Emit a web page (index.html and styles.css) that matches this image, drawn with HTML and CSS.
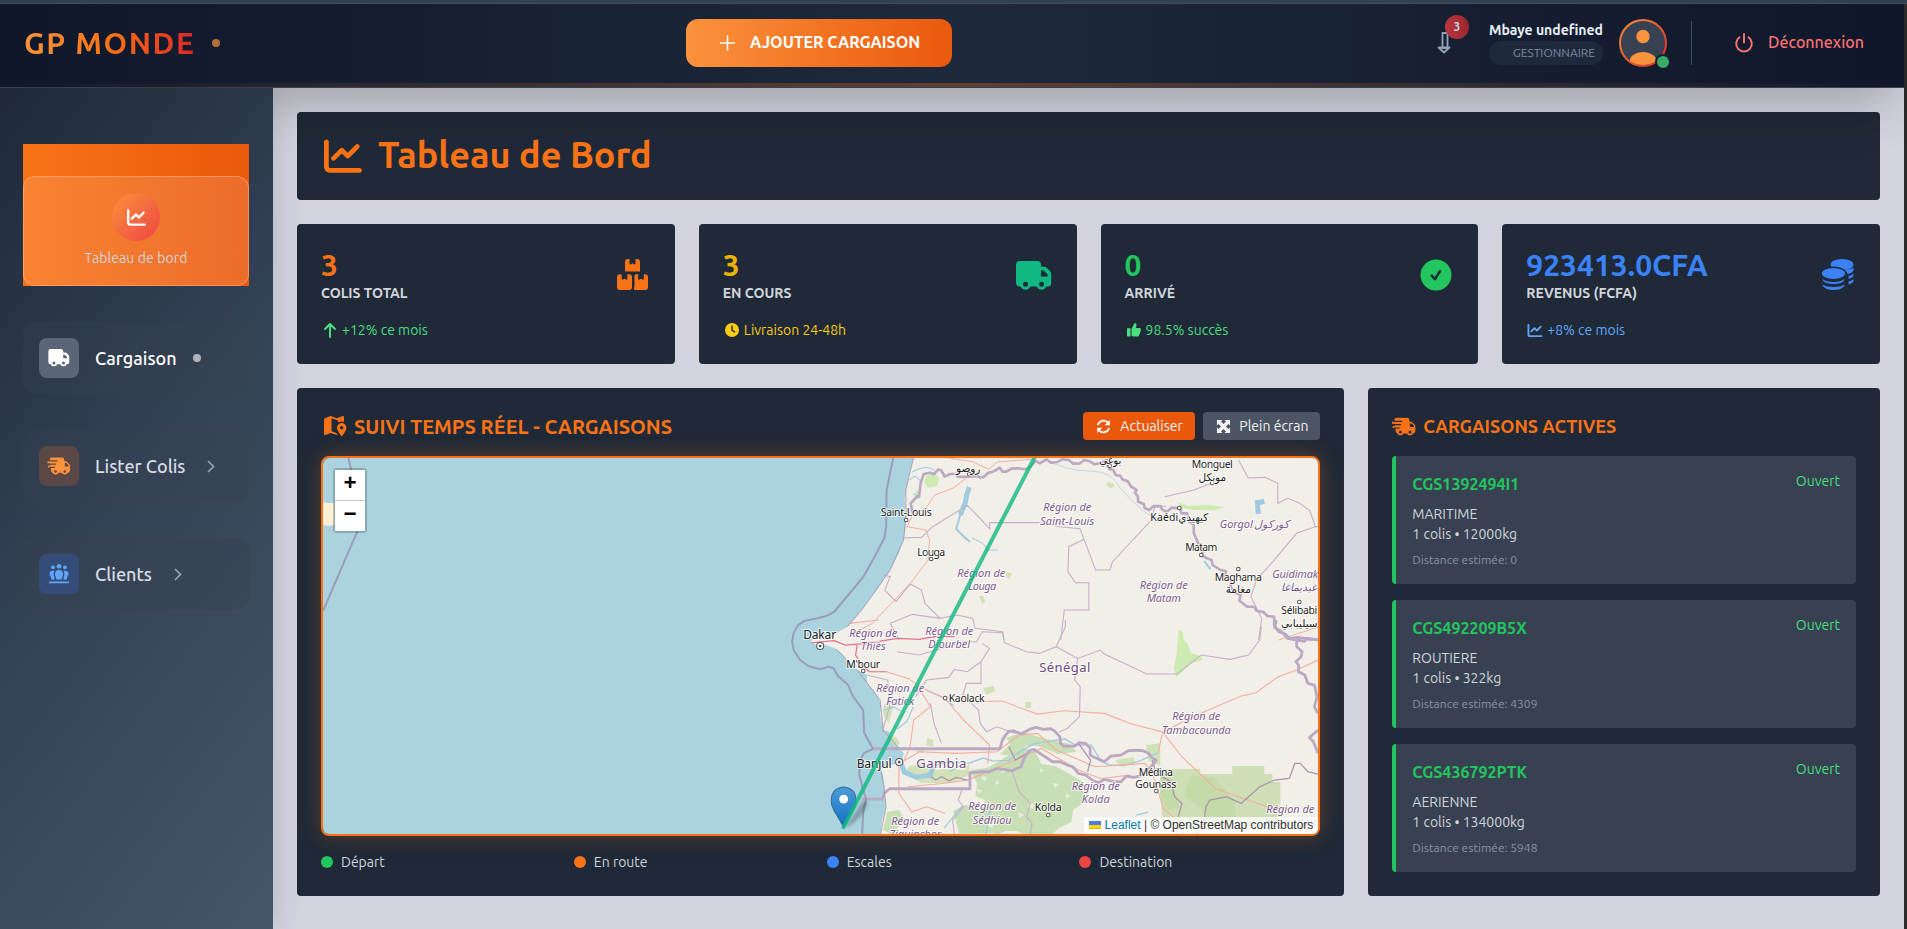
FILE: index.html
```html
<!DOCTYPE html>
<html lang="fr">
<head>
<meta charset="utf-8">
<title>GP Monde - Tableau de Bord</title>
<link rel="stylesheet" href="styles.css">
</head>
<body>
<svg class="defs" width="0" height="0" aria-hidden="true">
  <defs>
    <mask id="truckHoles"><rect width="36" height="30" fill="#fff"/><circle cx="9.5" cy="23.3" r="2.5" fill="#000"/><circle cx="25.5" cy="23.3" r="2.5" fill="#000"/><path d="M25 9.5h2.6l4 4v2H25z" fill="#000"/></mask>
    <mask id="fastHoles"><rect width="42" height="31" fill="#fff"/><circle cx="14" cy="25" r="2.3" fill="#000"/><circle cx="30" cy="25" r="2.3" fill="#000"/><path d="M30 10.5h2.6l4 4v2H30z" fill="#000"/><path d="M3 6.800h14M1 12.300h14M3 18h10" stroke="#000" stroke-width="2"/></mask>
    <symbol id="chart" viewBox="0 0 512 512"><path d="M64 64c0-17.700-14.300-32-32-32S0 46.300 0 64V400c0 44.200 35.800 80 80 80H480c17.700 0 32-14.300 32-32s-14.300-32-32-32H80c-8.800 0-16-7.200-16-16V64zm406.600 86.600c12.500-12.500 12.500-32.800 0-45.300s-32.800-12.500-45.300 0L320 210.700l-57.400-57.400c-12.500-12.500-32.800-12.500-45.300 0l-112 112c-12.500 12.500-12.500 32.800 0 45.300s32.800 12.500 45.300 0L240 221.300l57.400 57.400c12.500 12.500 32.800 12.500 45.300 0l128-128z"/></symbol>
    <symbol id="truck" viewBox="0 0 36 30"><g mask="url(#truckHoles)"><path d="M4 0h17a4 4 0 0 1 4 4v1.800h3.200a4 4 0 0 1 2.800 1.200l3 3a4 4 0 0 1 1.200 2.800V22a3.500 3.500 0 0 1-3.500 3.500H4A4 4 0 0 1 0 21.500V4a4 4 0 0 1 4-4z"/><circle cx="9.500" cy="23.300" r="5.400"/><circle cx="25.500" cy="23.300" r="5.400"/></g></symbol>
    <symbol id="truckfast" viewBox="0 0 40 31"><g mask="url(#fastHoles)"><path d="M8 1h17a4 4 0 0 1 4 4v2.500h3.700l5 5a4 4 0 0 1 1.300 3V23a4 4 0 0 1-4 4H10a4 4 0 0 1-4-4V18.300H2.500a1.800 1.800 0 0 1 0-3.600h2V11H1a1.800 1.800 0 0 1 0-3.600h3V5a4 4 0 0 1 4-4z"/><circle cx="14" cy="25" r="5.200"/><circle cx="30" cy="25" r="5.200"/></g></symbol>
    <symbol id="boxes" viewBox="0 0 31 31"><path d="M11 0h1.500v4.500a1 1 0 0 0 1.600.7l1.400-1 1.400 1a1 1 0 0 0 1.600-.7V0H20a3 3 0 0 1 3 3v9.500H8V3a3 3 0 0 1 3-3zM3 15.300h1.700v4.500a1 1 0 0 0 1.500.7l1.300-1 1.300 1a1 1 0 0 0 1.500-.7v-4.500H12a3 3 0 0 1 3 3V28a3 3 0 0 1-3 3H3a3 3 0 0 1-3-3v-9.700a3 3 0 0 1 3-3zM19.500 15.300h1.700v4.500a1 1 0 0 0 1.500.7l1.300-1 1.300 1a1 1 0 0 0 1.500-.7v-4.500H28a3 3 0 0 1 3 3V28a3 3 0 0 1-3 3H18q-1 0-1-1v-1l.5-2V18q-.5-2.700 2-2.700z"/></symbol>
    <symbol id="check" viewBox="0 0 32 32"><circle cx="16" cy="16" r="15.500"/><path d="M11.800 16.700l3.200 3.500 5-8" fill="none" stroke="#1f2937" stroke-width="2.500" stroke-linecap="round" stroke-linejoin="round"/></symbol>
    <symbol id="coins" viewBox="0 0 32 31"><ellipse cx="20" cy="5.500" rx="11.500" ry="5.500"/><path d="M31.500 8.500v3q-1 2.500-6 3.500-1-3-5-4.300 8 0 11-2.200zM31.500 14.500v2.500q-1 2-5 3v-3q3.500-.7 5-2.500zM31.500 20v2.500q-1 2-5 3v-3q3.500-.7 5-2.500z"/><ellipse cx="11.500" cy="14.500" rx="12.500" ry="6.200" stroke="#1f2937" stroke-width="1.500"/><path d="M.5 20q3.500 3 11 3t11-3v1q-2 4-11 4T.5 21zM.5 25.500q3.500 2.500 11 2.500t11-2.500v1.300q-3 4.200-11 4.200T.5 26.800z"/></symbol>
    <symbol id="arrowup" viewBox="0 0 14 16"><path d="M7 15V2M2 7l5-5 5 5" fill="none" stroke="currentColor" stroke-width="2" stroke-linecap="round" stroke-linejoin="round"/></symbol>
    <symbol id="clock" viewBox="0 0 16 16"><circle cx="8" cy="8" r="7"/><path d="M8 4v4.200l2.500 1.700" fill="none" stroke="#1f2937" stroke-width="1.400" stroke-linecap="round"/></symbol>
    <symbol id="thumb" viewBox="0 0 16 16"><path d="M1 6.200h3.500v8.300H1.800a.8.800 0 0 1-.8-.8zM5.500 7l2.600-5.200Q8.700.8 9.800 1.300q1 .6.700 1.700L9.800 6h4q1.200.2 1.200 1.300 0 .7-.6 1.100.5.600.3 1.300-.2.700-.8.900.3.700 0 1.200-.3.600-.9.700.2.900-.3 1.400-.4.600-1.200.6H8q-1.500-.2-2.500-1.100z"/></symbol>
    <symbol id="mapicon" viewBox="0 0 24 22"><path fill-rule="evenodd" d="M2 3.300L7.500 1l6.500 2.300L19.500 1q1.500-.3 1.500 1.200v4.600q-1-.3-2.300-.3-2 0-3.700 1V5.400L8.500 3.200v13l4.800 1.800 1.600 2.300L7.500 18 2.600 20Q1 20.300 1 18.800V4.800q0-1.100 1-1.500z"/><path fill-rule="evenodd" d="M18.700 8a4.700 4.700 0 0 1 4.700 4.700q0 3-4.700 8.800Q14 15.700 14 12.700A4.700 4.700 0 0 1 18.700 8zm0 3a1.700 1.700 0 1 0 0 3.400 1.700 1.700 0 0 0 0-3.400z"/><path d="M2 3.500l6-1.800v15.500l-6 2z"/></symbol>
    <symbol id="sync" viewBox="0 0 16 16"><path d="M2 6.500A6.200 6.200 0 0 1 13 4.300M14 9.500A6.200 6.200 0 0 1 3 11.700" fill="none" stroke="currentColor" stroke-width="2"/><path d="M14.800 1v5.700H9.100zM1.200 15V9.300h5.700z"/></symbol>
    <symbol id="expand" viewBox="0 0 16 16"><path d="M1 1h6L5.300 2.700 8 5.400l2.700-2.700L9 1h6v6l-1.700-1.700L10.600 8l2.700 2.700L15 9v6H9l1.700-1.700L8 10.600l-2.700 2.700L7 15H1V9l1.700 1.700L5.400 8 2.700 5.300 1 7z"/></symbol>
    <symbol id="users" viewBox="0 0 22 20"><circle cx="11" cy="2.300" r="2.300"/><circle cx="5" cy="3.300" r="1.900"/><circle cx="17" cy="3.300" r="1.900"/><path d="M8.200 15.500V14Q6.800 12.500 7 9.800 7.400 6 11 6t4 3.800q.2 2.700-1.200 4.200v1.500zM6.500 6.800Q4.800 10 6.500 14v1.500H3V13Q1 11.500 1.500 9 2.500 6 6.500 6.800zM15.500 6.800Q17.200 10 15.500 14v1.500H19V13q2-1.500 1.500-4-1-3-5-2.200zM1 17.500h20v1.700H1z"/></symbol>
    <linearGradient id="pinFill" x1="0" y1="0" x2="0" y2="1"><stop offset="0" stop-color="#4c9bd6"/><stop offset="1" stop-color="#126fc6"/></linearGradient>
  </defs>
</svg>

<div class="app">
  <header class="topbar">
    <div class="brand"><span class="brand-name">GP MONDE</span><span class="brand-dot"></span></div>
    <button class="add"><svg width="15" height="16" viewBox="0 0 15 16"><path d="M7.500.5v15M0 8h15" fill="none" stroke="currentColor" stroke-width="1.500"/></svg><span>AJOUTER CARGAISON</span></button>
    <div class="account">
      <div class="bell"><svg width="14" height="22" viewBox="0 0 14 22"><path d="M5.500 1h5v15h-5zM1.500 15.500h11L7 20.500z" fill="none" stroke="currentColor" stroke-width="1.800" stroke-linejoin="round"/></svg><span class="badge">3</span></div>
      <div class="who"><span class="who-name">Mbaye undefined</span><span class="who-role">GESTIONNAIRE</span></div>
      <div class="avatar">
        <svg width="44" height="44" viewBox="0 0 44 44"><circle cx="22" cy="22" r="22" fill="#374151"/><circle cx="22" cy="15.500" r="6.700" fill="#fb923c"/><path d="M9 40v-2.500Q13 31 22 31t13 6.500V40Q29 44 22 44T9 40z" fill="#fb923c"/></svg>
        <span class="online"></span>
      </div>
      <span class="sep"></span>
      <a class="logout"><svg width="20" height="20" viewBox="0 0 20 20"><path d="M5.500 4.300a7.800 7.800 0 1 0 9 0M10 1v8.500" fill="none" stroke="currentColor" stroke-width="2" stroke-linecap="round"/></svg><span>Déconnexion</span></a>
    </div>
  </header>

  <div class="body">
    <nav class="sidebar">
      <a class="nav-active"><span class="nav-card"><span class="nav-circle"><svg width="19" height="19"><use href="#chart"/></svg></span><span class="nav-label">Tableau de bord</span></span></a>
      <a class="nav-item"><span class="nav-icon white"><svg width="22" height="18"><use href="#truck"/></svg></span><span class="nav-text strong">Cargaison</span><span class="nav-dot"></span></a>
      <a class="nav-item"><span class="nav-icon orange"><svg width="24" height="18"><use href="#truckfast"/></svg></span><span class="nav-text">Lister Colis</span><svg class="chev" width="8" height="13" viewBox="0 0 8 13"><path d="M1 1l5.500 5.500L1 12" fill="none" stroke="currentColor" stroke-width="1.600"/></svg></a>
      <a class="nav-item"><span class="nav-icon blue"><svg width="22" height="20"><use href="#users"/></svg></span><span class="nav-text">Clients</span><svg class="chev" width="8" height="13" viewBox="0 0 8 13"><path d="M1 1l5.500 5.500L1 12" fill="none" stroke="currentColor" stroke-width="1.600"/></svg></a>
    </nav>

    <main class="main">
      <section class="card title"><svg width="38" height="38"><use href="#chart"/></svg><h1>Tableau de Bord</h1></section>

      <section class="stats">
        <div class="card stat c-orange"><div class="stat-top"><div><div class="num">3</div><div class="lbl">COLIS TOTAL</div></div><svg class="boxes" width="31" height="31"><use href="#boxes"/></svg></div><div class="trend green"><svg width="16" height="16"><use href="#arrowup"/></svg><span>+12% ce mois</span></div></div>
        <div class="card stat c-yellow"><div class="stat-top"><div><div class="num">3</div><div class="lbl">EN COURS</div></div><svg class="teal" width="36" height="30"><use href="#truck"/></svg></div><div class="trend yellow"><svg width="16" height="16"><use href="#clock"/></svg><span>Livraison 24-48h</span></div></div>
        <div class="card stat c-green"><div class="stat-top"><div><div class="num">0</div><div class="lbl">ARRIVÉ</div></div><svg class="ok" width="32" height="32"><use href="#check"/></svg></div><div class="trend green"><svg width="16" height="16"><use href="#thumb"/></svg><span>98.5% succès</span></div></div>
        <div class="card stat c-blue"><div class="stat-top"><div><div class="num">923413.0CFA</div><div class="lbl">REVENUS (FCFA)</div></div><svg class="money" width="32" height="31"><use href="#coins"/></svg></div><div class="trend blue"><svg width="16" height="15"><use href="#chart"/></svg><span>+8% ce mois</span></div></div>
      </section>

      <section class="panels">
        <div class="card panel map-panel">
          <div class="panel-head">
            <h2 class="h-map"><svg width="24" height="22"><use href="#mapicon"/></svg><span>SUIVI TEMPS RÉEL - CARGAISONS</span></h2>
            <div class="actions"><button class="btn refresh"><svg width="15" height="15"><use href="#sync"/></svg><span>Actualiser</span></button><button class="btn full"><svg width="15" height="15"><use href="#expand"/></svg><span>Plein écran</span></button></div>
          </div>
          <div class="map">
            <svg class="map-svg" viewBox="323 458 995 376" preserveAspectRatio="xMinYMin slice">
              <rect x="323" y="458" width="1000" height="380" fill="#aad3df"/>
              <path fill="#f2efe9" d="M913.700 456L909 474 905.600 490 904.500 500 906 513 905.600 527 903.400 540 898 554 890 570 878 588 863 608 855 618 847 627 836 633 824 637 812 638 811 641 816 645 826 645 836 649 843 655 847 661 857 670 866.500 675 867 683 873 690 878 697 881 705 880 715 883 730 889.500 732 893 741 898.700 748 903.500 753 902 763 895 764 888 766 880 767 883 776 884 787 885.800 807 882 820 880 836 1320 836V456z"/>
              <path fill="#fbefd5" d="M323 502l5 1 6 0v22l-5 1-6-1z"/>
              <!-- vegetation -->
              <g fill="#cdebb0"><path d="M926 476l8-3 5 5-2 8-9 2-4-5zM916 490l4 2-2 8-4-2zM1178 502l10 4 22-1 14 2-8 3-22 0-14-2z"/><path d="M1178.500 630l4 2 1 8 4 4 3 9 10 3 2 4-11 3-15 14-3-8 3-16z"/></g>
              <g fill="#c8dfab" opacity=".8"><path d="M1025 702h6v6h-6zM983 688l10-2 2 5-9 4zM1007 572l5 2-3 5-4-3zM1108 482l6 2-2 5-6-4zM979 596l4 0 2 6-3 2zM887 735l9 2 4 7-5 3-8-8zM884 704l9 2-4 18-6-10zM917 747l6 0 1 6-8-1zM927 738l6 2v7l-7-2zM1146 745l14-2v23l-12-5zM1115 760l18-3 2 7-14 3zM908 767l14-4 8 8 14-2 20 1 5-7v12l-18 8-30 0-16-10z"/></g>
              <g fill="#b7d8a0" opacity=".7"><path d="M970 770l16-2 12-6 7-5 20-8 10 2 6 13 14 2 18 10 10 6 4 18-14 10-2 12-12 6-14 12-14-1-14-8-12 0-8 4-8-5-8-18 4-12-10-4 2-12zM953 811l12-6 18 2 14 10 4 16-42 1zM1000 754l12-12 14 2-6 14zM887 812l12-2 6 10-14 14-8-4zM1006 738l16-6 28 8 20 4 6 8-18 2-20-8-14 0-12 2z"/></g>
              <g fill="#f2efe9" opacity=".8"><path d="M982 776l5 1-2 4-4-2zM1002 768l4 3-5 2zM976 789l6 1-3 4zM1030 803l5 2-3 4-5-2zM1018 812l6 3-5 3zM1052 783l7 1-4 4zM1066 793l5 3-6 3zM972 815l5 2-4 4zM988 822l6 1-2 5-5-2zM1012 755l5 2-4 2zM1040 768l4 2-4 3zM996 780l3 3-4 2z"/></g>
              <path fill="#cfdfb5" d="M1160 769h40v-3l0 8h32v-8h32v8h8v8h8v40l-8 12-30-6-50 2-20 0-10-14-2-24z"/>
              <path fill="#b9d79e" opacity=".5" d="M1190 775l24 3 20 22 2 22-22 6-14-20-16-12zM1160 772l12 8 8 28-12 2-8-12z"/>
              <!-- water -->
              <g fill="none" stroke="#9fcbe0" stroke-width="2.200"><path d="M969 487q-3 8-4 16l-5 12" stroke-width="5"/><path d="M960 515l-4 14 8 8 6 5" stroke-width="2"/><path d="M972 538l10 5 6 7h10" stroke-width="1"/><path d="M1257 500l1 14M1258 503l6-2" stroke-width="5"/><path d="M1204 561l6 8" stroke-width="2"/><path d="M901 763l3 9 12 5 14-2 3-8" stroke-width="5"/><path d="M931 766l18-4 20 1 14-5 10 3 16-1 10-8 14-8 16-3 16-2 10 6 16 0 10 16 8 4 16 0 14-4 18-8" stroke-width="1.400"/><path d="M883 710l11-3 8 5M897 729l10-8 6-14M926 690l14 6 14 10M963 764l-14 8M962 806l-10 12-8 10M990 810l-4 24M1136 815l12-3" stroke-width="1.200"/><path d="M909 480l6-4 6 6-2 14-6-2M912 472q14-8 22-2" stroke-width="1"/></g>
              <path fill="none" stroke="#9fcbe0" stroke-width=".9" opacity=".7" d="M1044 459q22 12 45 12t30 16q10 12 22 22t22 10"/>
              <!-- roads and limits, north half -->
              <g transform="translate(640 380) scale(.4464 .3333)" fill="none">
                <g stroke="#f3ae9f" stroke-width="1" class="ns"><path d="M735 290L700 325 660 345 640 385 610 405 598 440 640 450 648 480 645 540 605 610 570 660 520 730 465 770M690 234L745 245 780 268 800 246 875 238M1430 780L1520 740"/></g>
                <g stroke="#c4b0c8" stroke-width="1.100" class="ns"><path d="M592 474L630 472 655 440 733 376 783 446V428H895L940 440 985 446 1020 570H1052L1058 545 1145 420 1152 382 1178 378M1175 350L1240 330 1282 308M995 478L960 500 958 575 975 608H1005V690H950L942 780M1340 240L1362 294 1400 292 1428 310V370L1450 355 1475 368 1500 392 1512 440H1520M1512 440L1470 460 1420 540 1380 600 1368 650 1392 715 1385 780M545 585L560 590 548 630 573 665 605 612 630 630 638 670 672 715 710 705 745 715 750 745 812 755 815 780M672 715L610 703 560 730 580 780"/></g>
                <g stroke="#bba8c2" stroke-width="2.600" stroke-linejoin="round" class="ns"><path d="M610 400L606 370 618 352 625 350 628 310 635 282 650 278 658 282 668 268 675 272 682 290 694 282 706 282 712 291 735 290 755 288 762 293 770 290 780 278 790 275 797 270 805 263 812 275 820 275 832 266 845 265 862 268 875 260 885 242 895 250 910 238 920 248 935 246 945 238 960 240 970 251 985 250 995 240 1005 243 1018 253 1030 250 1045 240 1045 252 1052 268 1060 270 1065 285 1075 287 1080 298 1092 304 1100 320 1112 330 1108 338 1115 350 1115 365 1128 372 1130 384 1140 390 1150 378 1165 378 1170 390 1180 395 1190 383 1210 385 1212 400 1225 400 1230 425 1240 435 1240 460 1250 490 1262 510 1256 525 1270 535 1280 540 1282 555 1300 570 1312 574 1310 590 1325 600 1322 620 1335 640 1345 645 1342 662 1360 680 1375 680 1380 692 1395 695 1405 708 1420 710 1420 735 1430 755 1445 762 1455 775 1475 772 1500 778 1520 778"/></g>
              </g>
              <!-- roads and limits, south half -->
              <g transform="translate(760 620) scale(.3699 .3333)" fill="none">
                <path d="M140 68L200 62 230 75 290 70 370 55 430 58 480 48 525 50M262 75L258 105 275 135 295 155 342 155" stroke="#e0708f" stroke-width="1.200" class="nsp"/>
                <g stroke="#f3ae9f" stroke-width="1.100" class="ns"><path d="M342 155L400 175 440 205 500 235 550 300 620 375 615 430M540 245L655 243 700 262 750 282 820 272 930 280 1000 310 1088 336 1180 285 1300 228 1340 218 1400 170 1450 150 1508 120M1088 336L1075 400M1088 336L1140 410 1230 505 1370 560M385 425L430 395 530 400 640 395 700 345 750 340 800 390 905 440 1040 430 1060 460 1090 565 1140 615M375 425V520L410 575 450 560 500 580M430 205L460 260 415 300 405 380 390 420M240 10L320 0M400 500L490 490 560 480 700 415 760 385 860 450 920 475 1000 465"/></g>
                <g stroke="#c4b0c8" stroke-width="1.100" class="ns"><path d="M288 165L345 180 350 260 330 335M370 95L430 105 550 65 585 65 600 35 655 38 660 68 720 95 755 100 800 80 858 115 920 90 930 102 1045 162H1125L1192 105 1270 118 1320 105 1350 60 1355 20M800 80L825 20V0M858 115L850 180 865 200 863 290 830 325 808 336M600 70L620 85 597 125V190H557L548 225 590 270 595 310 612 335 640 320 690 340M597 125L560 155 525 148 510 172 450 180 420 230M460 250L470 310 490 370M680 450L700 515 730 550 720 590 735 610 730 642M545 512L535 540 550 560 520 600 525 642"/></g>
                <g stroke="#a995b0" stroke-width="1.300" class="ns"><path d="M1060 420L1070 460 1110 485 1120 530 1140 550 1130 590 1145 640M1180 642L1200 600 1205 560 1215 540 1260 530 1300 550 1330 520 1350 500 1390 480 1430 475 1445 430 1460 430 1480 455 1508 462M462 470L475 480 490 470 510 482 530 472 560 480M672 380L690 420 720 400M885 455L893 420 860 370"/></g>
                <g stroke="#bba8c2" stroke-width="2.800" stroke-linejoin="round" class="ns"><path d="M305 386H648L654 362 660 350 672 334 685 332 705 342 728 328 745 322 765 328 785 326 795 332 810 350 812 370 820 378 850 378 862 368 880 370 892 385 892 405 900 410 930 425 948 408 975 405 995 392 1015 390 1035 392 1050 400 1058 412 1070 420 1060 435 1035 465 1010 472 990 468 975 485 960 485 930 478 915 488 900 482 880 465 860 460 845 440 830 435 810 425 790 425 770 410 740 388 728 392 715 410 705 440 680 452 640 445 620 455 600 455 567 458V506H350L335 520 330 537H275M1395 0L1390 22 1410 35 1425 55 1450 60 1450 80 1465 95 1462 110 1448 125 1455 135 1455 155 1472 165 1480 190 1498 195 1505 230 1498 260 1508 280M1445 58L1470 64 1480 55 1508 60M1508 330L1485 352 1495 365 1508 400"/></g>
              </g>
              <!-- maritime limits -->
              <g fill="none" stroke="#9a9db8" stroke-width="2" stroke-linejoin="round"><path d="M893 458L886.400 490 886 527 884 538 876 554 863 577 834 611.700 826 616 818.600 618 804 621 798 625 793.500 633 792 641 793.500 650 800 660 808 666 817 668.500 821 669 828 666.500 833 668 838 676 848 685 852 695 863 710 864 733 872.800 748.700 864 753 860 760 859 774 862 786 866 799 863 812 862 834"/><path d="M348 456L358 500 357 532 323 611"/></g>
              <path fill="none" stroke="#a18fae" stroke-width=".8" d="M913.700 456L905.600 490 906 513 903.400 540 890 570 863 608 847 627M836 649L857 670 867 683 880 700 883 730 898.700 748M880 767L884 787 885.800 807 880 836"/>
              <g fill="#fff" stroke="#555" stroke-width="1"><circle cx="969" cy="474" r="1.800"/><circle cx="906" cy="520" r="1.800"/><circle cx="931" cy="559" r="1.800"/><circle cx="1109.500" cy="466" r="1.800"/><circle cx="1212" cy="483" r="1.800"/><circle cx="1179" cy="508" r="1.800"/><circle cx="1201" cy="555" r="1.800"/><circle cx="1238" cy="569" r="1.800"/><circle cx="1299" cy="602" r="1.800"/><circle cx="863" cy="671" r="1.800"/><circle cx="945" cy="698" r="1.800"/><circle cx="1048" cy="815" r="1.800"/><circle cx="1156" cy="791" r="1.800"/><circle cx="820" cy="646" r="3.500"/><circle cx="899" cy="762" r="3.500"/></g>
              <circle cx="820" cy="646" r="1.300" fill="#444"/><circle cx="899" cy="762" r="1.300" fill="#444"/>
              <g class="place">
                <text x="968" y="472">روصو</text><text x="1110" y="464">بوغي</text>
                <text x="906" y="516" textLength="51">Saint-Louis</text><text x="931" y="556" textLength="28">Louga</text>
                <text x="1212" y="468" textLength="41">Monguel</text><text x="1212" y="481">مونكل</text>
                <text x="1164" y="521" textLength="28">Kaédi</text><text x="1193" y="521">كيهيدي</text>
                <text x="1201" y="551" textLength="32">Matam</text>
                <text x="1238" y="581" textLength="47">Maghama</text><text x="1238" y="593">مغامة</text>
                <text x="1299" y="614" textLength="36">Sélibabi</text><text x="1299" y="627">سيليبابي</text>
                <text class="city" x="819.500" y="639" textLength="33">Dakar</text><text x="863" y="668" textLength="34">M'bour</text>
                <text x="966.500" y="702" textLength="36">Kaolack</text><text class="city" x="874" y="768" textLength="35">Banjul</text>
                <text x="1155.500" y="776" textLength="34">Médina</text><text x="1155.500" y="788" textLength="41">Gounass</text>
                <text x="1048" y="811" textLength="27">Kolda</text>
              </g>
              <g class="region">
                <text x="1067" y="511" textLength="48">Région de</text><text x="1067" y="525" textLength="54">Saint-Louis</text>
                <text x="981" y="577" textLength="48">Région de</text><text x="982" y="590" textLength="28">Louga</text>
                <text x="1163.500" y="589" textLength="48">Région de</text><text x="1163.500" y="602" textLength="34">Matam</text>
                <text x="1236" y="528" textLength="33">Gorgol</text><text x="1271" y="528">كوركول</text>
                <text x="1295" y="578" textLength="46">Guidimak</text><text x="1299" y="591">غيديماغا</text>
                <text x="873" y="637" textLength="48">Région de</text><text x="873" y="650" textLength="25">Thiès</text>
                <text x="949" y="635" textLength="48">Région de</text><text x="949" y="648" textLength="42">Diourbel</text>
                <text x="900" y="692" textLength="48">Région de</text><text x="900" y="705" textLength="28">Fatick</text>
                <text x="1196" y="720" textLength="48">Région de</text><text x="1196" y="734" textLength="69">Tambacounda</text>
                <text x="1095.500" y="790" textLength="48">Région de</text><text x="1095.500" y="803" textLength="28">Kolda</text>
                <text x="992" y="810" textLength="48">Région de</text><text x="992" y="824" textLength="39">Sédhiou</text>
                <text x="915" y="825" textLength="48">Région de</text><text x="915" y="838" textLength="52">Ziguinchor</text>
                <text x="1290" y="813" textLength="48">Région de</text><text x="1290" y="826" textLength="52">Kédougou</text>
              </g>
              <g class="country"><text x="1064.500" y="672" textLength="51">Sénégal</text><text x="941" y="768" textLength="50">Gambia</text></g>
              <path d="M846 826l16-24q5-4 5 3-4 11-19 22z" fill="#000" opacity=".25" class="pin-shadow"/>
              <path d="M843.500 787q12 1 12.300 13 0 6.500-5 13.500L843.500 827 836 814q-5-7.500-5-13.500Q831.500 788 843.500 787z" fill="url(#pinFill)" stroke="#2e6c97" stroke-width="1"/>
              <circle cx="843.500" cy="799" r="4.400" fill="#fff"/>
              <path d="M1035 456L843.400 827" stroke="#10b981" stroke-width="4" stroke-linecap="round" opacity=".8"/>
            </svg>
            <div class="zoom"><span>+</span><span>−</span></div>
            <div class="credit"><svg width="12" height="8" viewBox="0 0 12 8"><path fill="#4C7BE1" d="M0 0h12v4H0z"/><path fill="#FFD500" d="M0 4h12v3H0z"/><path fill="#E0BC00" d="M0 7h12v1H0z"/></svg> <a>Leaflet</a> | © OpenStreetMap contributors</div>
          </div>
          <div class="legend"><span><i class="dot g"></i>Départ</span><span><i class="dot o"></i>En route</span><span><i class="dot b"></i>Escales</span><span><i class="dot r"></i>Destination</span></div>
        </div>

        <div class="card panel">
          <div class="panel-head"><h2 class="h-act"><svg width="24" height="19"><use href="#truckfast"/></svg><span>CARGAISONS ACTIVES</span></h2></div>
          <div class="list">
            <article class="cargo"><div class="cargo-top"><h3>CGS1392494I1</h3><span class="state">Ouvert</span></div><p>MARITIME</p><p>1 colis • 12000kg</p><small>Distance estimée: 0</small></article>
            <article class="cargo"><div class="cargo-top"><h3>CGS492209B5X</h3><span class="state">Ouvert</span></div><p>ROUTIERE</p><p>1 colis • 322kg</p><small>Distance estimée: 4309</small></article>
            <article class="cargo"><div class="cargo-top"><h3>CGS436792PTK</h3><span class="state">Ouvert</span></div><p>AERIENNE</p><p>1 colis • 134000kg</p><small>Distance estimée: 5948</small></article>
          </div>
        </div>
      </section>
    </main>
  </div>
</div>
</body>
</html>
```
FILE: styles.css
```css
* { box-sizing: border-box; margin: 0; padding: 0; }
body { background: #2b2b2b; font-family: "Ubuntu", "Noto Sans", sans-serif; color: #d1d5db; overflow: hidden; }
svg { display: block; fill: currentColor; flex: none; }
.defs { position: absolute; }
button { border: 0; font: inherit; color: inherit; }
.app { width: 1904px; height: 929px; display: flex; flex-direction: column; }

.topbar { height: 88px; flex: none; position: relative; z-index: 3; display: flex; justify-content: space-between; align-items: center; padding: 0 24px 2px; border-bottom: 1px solid #334155; background: linear-gradient(90deg, transparent, rgba(249,115,22,.3), transparent) 0 83px / 100% 4px no-repeat, linear-gradient(90deg, #0f172a, #1e293b 50%, #0f172a); box-shadow: 0 25px 50px -12px rgba(0,0,0,.25); }
.topbar::before { content: ""; position: absolute; left: 0; top: 0; width: 1907px; height: 3px; background: #334155; border-bottom: 1px solid #484b51; }
.brand { display: flex; align-items: center; justify-content: space-between; width: 196px; }
.brand-name { font-size: 30px; font-weight: 700; letter-spacing: 1.500px; line-height: 40px; background: linear-gradient(90deg, #fb923c, #f97316 50%, #dc2626); -webkit-background-clip: text; background-clip: text; color: transparent; }
.brand-dot { width: 8px; height: 8px; border-radius: 50%; background: #fb923c; opacity: .7; }
.add { display: flex; align-items: center; gap: 15px; width: 266px; height: 48px; padding-left: 34px; border-radius: 12px; background: linear-gradient(90deg, #fb923c, #ea580c); color: #fff; font-size: 16px; line-height: 20px; font-weight: 600; white-space: nowrap; }
.add span { margin-top: -2px; }
.account { width: 462px; display: flex; align-items: center; justify-content: flex-end; }
.bell { position: relative; color: #94a3b8; margin-right: 38px; }
.badge { position: absolute; left: 8px; top: -17px; width: 24px; height: 24px; border-radius: 50%; background: linear-gradient(90deg, #b9373f, #9c2530); color: #c9ced6; font-size: 12px; font-weight: 600; line-height: 24px; text-align: center; }
.who { display: flex; flex-direction: column; align-items: flex-end; gap: 1px; margin-right: 16px; white-space: nowrap; }
.who-name { font-size: 14px; line-height: 20px; font-weight: 600; color: #e8edf4; }
.who-role { width: 114px; height: 24px; line-height: 24px; padding-right: 8px; border-radius: 12px; background: #1e293b; color: #7c8aa0; font-size: 12px; text-align: right; }
.avatar { position: relative; width: 48px; height: 48px; padding: 2px; border-radius: 50%; background: linear-gradient(135deg, #fb923c, #dc2626); }
.online { position: absolute; right: -4px; bottom: -3px; width: 16px; height: 16px; border-radius: 50%; background: #3ba968; border: 2px solid #172033; }
.sep { width: 1px; height: 44px; background: #3b4a60; margin: 0 42px 0 24px; }
.logout { display: flex; align-items: center; gap: 14px; color: #f87171; font-size: 16px; line-height: 20px; font-weight: 500; width: 146px; white-space: nowrap; }
.logout span { margin-top: -2px; }

.body { flex: 1; display: flex; min-height: 0; }
.sidebar { width: 273px; flex: none; position: relative; z-index: 4; display: flex; flex-direction: column; gap: 36px; padding: 56px 24px 0 23px; background: linear-gradient(127deg, #1f2937, #334155 45%, #475569); box-shadow: 0 0 30px rgba(0,0,0,.14); clip-path: inset(0 -60px 0 0); }
.nav-active { height: 142px; padding-top: 32px; background: linear-gradient(90deg, #f97316, #ea580c); }
.nav-card { height: 110px; display: flex; flex-direction: column; align-items: center; gap: 7px; padding-top: 16px; border: 1px solid rgba(255,255,255,.25); border-radius: 12px; background: rgba(255,255,255,.12); }
.nav-circle { width: 48px; height: 48px; border-radius: 50%; display: grid; place-items: center; color: #fff; background: linear-gradient(135deg, #fb923c, #ef4444); }
.nav-label { font-size: 14px; line-height: 20px; letter-spacing: .1px; color: #d1d5db; }
.nav-item { height: 72px; display: flex; align-items: center; padding-left: 16px; border-radius: 12px; background: rgba(55,65,81,.35); }
.nav-icon { width: 40px; height: 40px; border-radius: 8px; display: grid; place-items: center; margin-right: 16px; }
.white { background: #5a6575; color: #fff; }
.orange { background: #594845; color: #fb923c; }
.nav-icon.blue { background: #334d78; color: #60a5fa; }
.nav-text { font-size: 18px; line-height: 24px; margin-top: -1px; font-weight: 500; color: #d8dde4; white-space: nowrap; }
.nav-text.strong { color: #fff; font-weight: 500; }
.nav-dot { width: 8px; height: 8px; border-radius: 50%; background: #adb3bc; margin-left: 16px; }
.chev { color: #9ca3af; margin-left: 22px; }

.main { flex: 1; min-width: 0; padding: 24px; display: flex; flex-direction: column; gap: 24px; background: #d1d4dd; }
.card { background: #1f2937; border-radius: 4px; }
.title { height: 88px; display: flex; align-items: center; gap: 16px; padding-left: 27px; color: #f97316; }
.title h1 { font-size: 36px; line-height: 44px; font-weight: 600; margin-top: -2px; }
.stats { display: grid; grid-template-columns: repeat(4, 1fr); gap: 24px; }
.stat { height: 140px; padding: 23px 24px; }
.stat-top { display: flex; justify-content: space-between; }
.stat-top svg { margin-top: 12px; margin-right: 2px; }
.stat-top .boxes { margin-right: 3px; }
.stat-top .teal { margin-right: 1px; margin-top: 14px; color: #10b981; }
.num { font-size: 30px; line-height: 36px; font-weight: 600; }
.lbl { font-size: 14px; line-height: 20px; font-weight: 600; color: #d1d5db; }
.trend { display: flex; align-items: center; gap: 4px; margin-top: 17px; padding-left: 1px; font-size: 14px; line-height: 20px; }
.c-orange { color: #f97316; } .c-yellow { color: #eab308; } .c-green { color: #22c55e; } .c-blue { color: #3b82f6; }
.green { color: #4ade80; } .yellow { color: #facc15; } .trend.blue { color: #60a5fa; }

.panels { display: grid; grid-template-columns: repeat(3, minmax(0, 1fr)); gap: 24px; }
.panel { height: 508px; padding: 24px; }
.map-panel { grid-column: span 2; }
.panel-head { height: 28px; display: flex; align-items: center; justify-content: space-between; margin-bottom: 16px; }
.panel-head h2 { display: flex; align-items: center; font-weight: 600; color: #f97316; white-space: nowrap; }
.panel-head .h-map { gap: 7px; padding-left: 2px; font-size: 20px; }
.panel-head .h-act { gap: 7px; font-size: 18px; }
.actions { display: flex; gap: 8px; }
.btn { height: 28px; display: flex; align-items: center; gap: 8px; padding-left: 13px; border-radius: 4px; color: #f3f4f6; font-size: 14px; white-space: nowrap; }
.refresh { width: 112px; background: #ea580c; gap: 9px; } .full { width: 117px; background: #4b5563; }
.map { position: relative; height: 380px; border: 2px solid #f97316; border-radius: 8px; overflow: hidden; box-shadow: 0 0 20px rgba(249,115,22,.3); }
.map-svg { width: 100%; height: 100%; }
.ns path, .nsp { vector-effect: non-scaling-stroke; }
.map text { text-anchor: middle; paint-order: stroke; stroke: rgba(255,255,255,.7); stroke-width: 2px; font-family: "Noto Sans", "DejaVu Sans", sans-serif; }
.place text { font-size: 10.500px; fill: #222; }
.place .city { font-size: 12px; }
.region text { font-size: 11px; font-style: italic; fill: #7d5b8c; }
.country text { font-size: 13px; fill: #6e4b7d; }
.pin-shadow { filter: blur(1.500px); }
.zoom { position: absolute; left: 10px; top: 10px; border: 2px solid rgba(0,0,0,.2); border-radius: 4px; background-clip: padding-box; }
.zoom span { display: block; width: 30px; height: 30px; background: #fff; color: #000; font: bold 22px/30px "Liberation Mono", monospace; text-align: center; }
.zoom span:first-child { height: 31px; border-bottom: 1px solid #ccc; }
.credit { position: absolute; right: 0; bottom: 0; padding: 0 5px; background: rgba(255,255,255,.8); color: #333; font: 12px/17px "Liberation Sans", Arial, sans-serif; white-space: nowrap; }
.credit svg { display: inline-block; }
.credit a { color: #0078a8; }
.legend { display: grid; grid-template-columns: repeat(4, 1fr); gap: 12px; margin-top: 16px; font-size: 14px; line-height: 20px; }
.legend span { display: flex; align-items: center; }
.dot { width: 12px; height: 12px; border-radius: 50%; margin-right: 8px; }
.g { background: #22c55e; } .o { background: #f97316; } .b { background: #3b82f6; } .r { background: #ef4444; }

.list { display: flex; flex-direction: column; gap: 16px; }
.cargo { height: 128px; padding: 16px; border-left: 4px solid #22c55e; border-radius: 4px; background: #374151; font-size: 14px; line-height: 20px; }
.cargo-top { display: flex; justify-content: space-between; height: 24px; margin-bottom: 8px; }
.cargo h3 { font-size: 16px; line-height: 24px; font-weight: 600; color: #22c55e; }
.state { color: #4ade80; line-height: 18px; }
.cargo small { display: block; margin-top: 8px; font-size: 12px; line-height: 16px; color: #8b93a1; }
```
